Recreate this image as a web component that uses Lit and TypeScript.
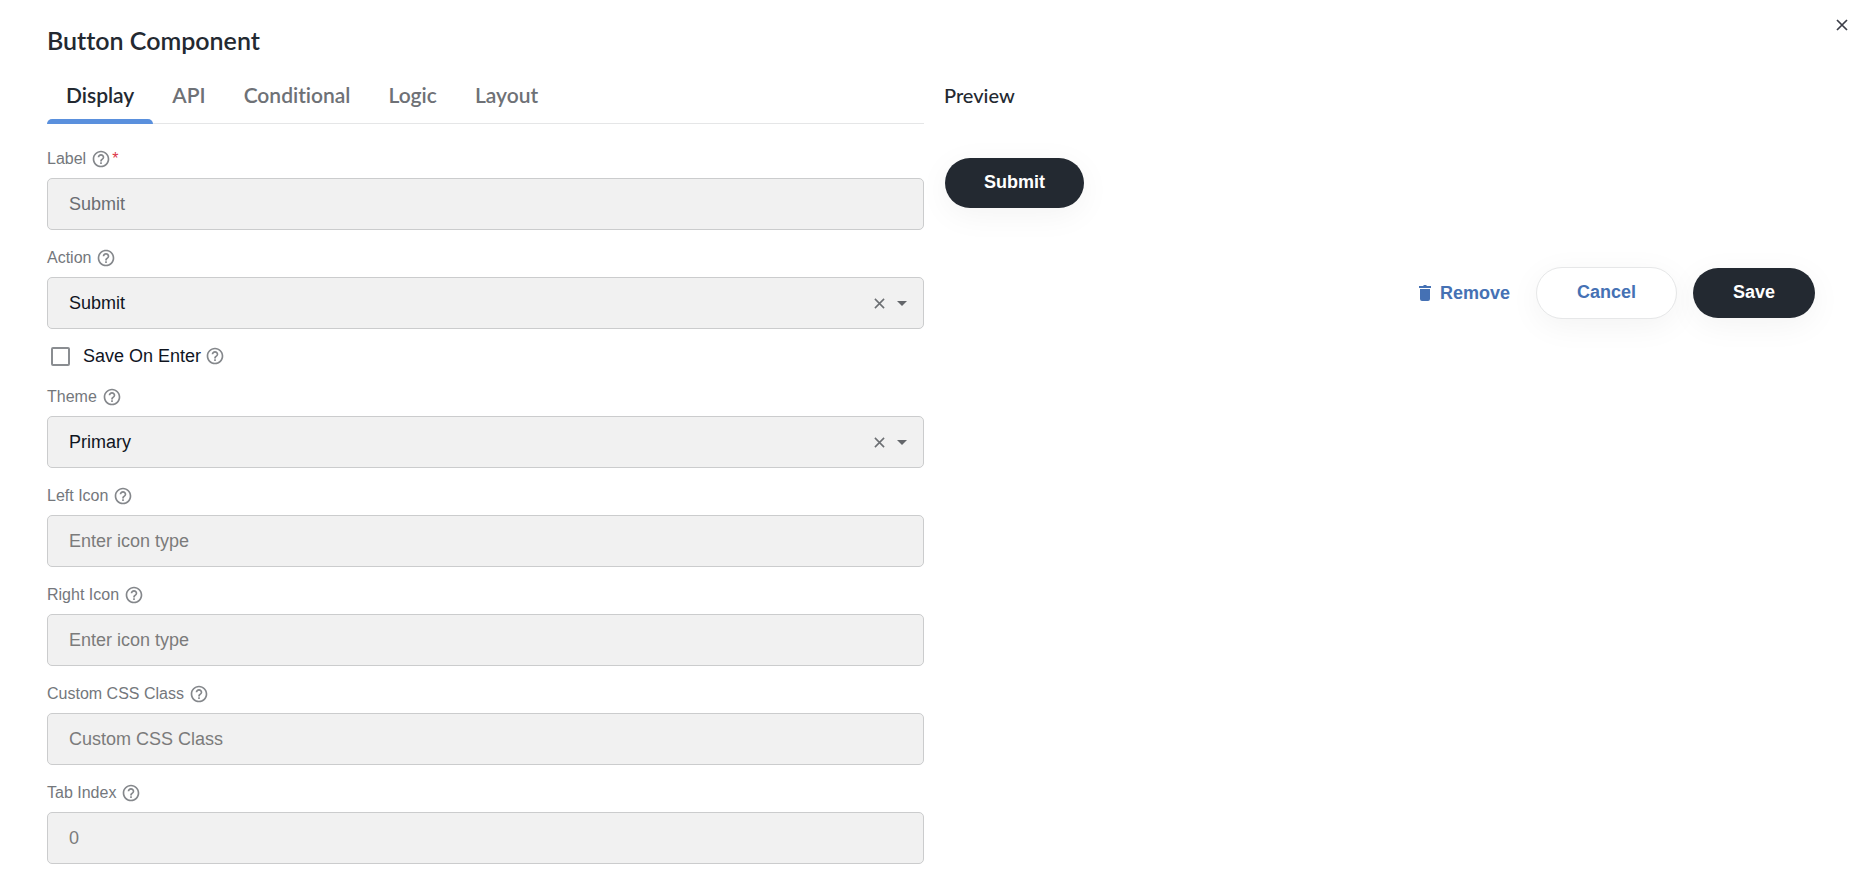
import { LitElement, html, css, svg, nothing } from "lit";
import { customElement, property, state } from "lit/decorators.js";
import { classMap } from "lit/directives/class-map.js";

const helpIcon = html`<svg class="help" viewBox="0 0 24 24" width="20" height="20" aria-hidden="true">
  ${svg`<path fill="currentColor" d="M11 18h2v-2h-2v2zm1-16C6.480 2 2 6.480 2 12s4.480 10 10 10 10-4.480 10-10S17.520 2 12 2zm0 18c-4.410 0-8-3.590-8-8s3.590-8 8-8 8 3.590 8 8-3.590 8-8 8zm0-14c-2.210 0-4 1.790-4 4h2c0-1.100.9-2 2-2s2 .9 2 2c0 2-3 1.750-3 5h2c0-2.250 3-2.500 3-5 0-2.210-1.790-4-4-4z"/>`}
</svg>`;

const crossIcon = (size: number) => html`<svg viewBox="0 0 12 12" width=${size} height=${size} aria-hidden="true">
  ${svg`<path d="M1 1l10 10M11 1L1 11" fill="none" stroke="currentColor" stroke-width="1.700"/>`}
</svg>`;

@customElement("form-field")
class FormField extends LitElement {
  @property() label = "";
  @property() placeholder = "";
  @property() value = "";
  @property({ type: Boolean }) required = false;
  @property({ type: Array }) options: string[] | null = null;

  static styles = css`
    :host { display: block; }
    .label {
      display: flex;
      align-items: center;
      height: 27px;
      padding: 14px 0 6px;
      font-size: 16px;
      color: #74777c;
    }
    .help { margin-left: 5px; color: #84878b; }
    .required { color: #dc3545; margin-left: 1px; }
    .control {
      display: flex;
      align-items: center;
      box-sizing: border-box;
      height: 52px;
      border: 1px solid #cbcccd;
      border-radius: 5px;
      background: #f1f1f1;
    }
    input, select {
      flex: 1;
      min-width: 0;
      height: 100%;
      box-sizing: border-box;
      padding: 0 21px;
      border: 0;
      outline: 0;
      background: none;
      appearance: none;
      font: inherit;
      color: #6a6d72;
    }
    select { color: #10151f; }
    input::placeholder { color: #7b7b7b; opacity: 1; }
    .clear {
      display: flex;
      padding: 0;
      border: 0;
      background: none;
      color: #6c6f73;
    }
    .arrow { margin: 0 16px 0 12px; color: #63666a; }
  `;

  private control() {
    if (!this.options) {
      return html`<input id="control" placeholder=${this.placeholder} .value=${this.value} ?required=${this.required} />`;
    }
    return html`
      <select id="control">
        ${this.options.map((o) => html`<option ?selected=${o === this.value}>${o}</option>`)}
      </select>
      <button class="clear" type="button" aria-label="Clear">${crossIcon(11)}</button>
      <svg class="arrow" viewBox="0 0 10 5" width="10" height="5" aria-hidden="true">
        ${svg`<path d="M0 0h10L5 5z" fill="currentColor"/>`}
      </svg>
    `;
  }

  render() {
    return html`
      <label class="label" for="control">
        ${this.label} ${helpIcon}
        ${this.required ? html`<span class="required">*</span>` : nothing}
      </label>
      <div class="control">${this.control()}</div>
    `;
  }
}

@customElement("app-root")
class AppRoot extends LitElement {
  @state() private active = "Display";

  static styles = css`
    :host {
      display: block;
      position: relative;
      padding: 22px 50px 6px 47px;
      background: #fff;
      color: #232931;
      font-family: "Liberation Sans", Arial, sans-serif;
      font-size: 18px;
    }
    h1, h2 {
      margin: 0;
      font-family: Lato, sans-serif;
      font-variant-ligatures: none;
    }
    h1 { font-size: 25px; line-height: 36px; font-weight: 600; }
    h2 { font-size: 20px; line-height: 30px; font-weight: 500; }
    .close {
      position: absolute;
      top: 15px;
      right: 19px;
      display: flex;
      padding: 4px;
      border: 0;
      background: none;
      color: #3c3e48;
    }
    .columns {
      display: grid;
      grid-template-columns: 1fr 1fr;
      gap: 20px;
      padding-top: 13px;
    }
    .tabs {
      display: flex;
      border-bottom: 1px solid #e5e6e7;
      margin-bottom: 7px;
    }
    .tab {
      display: flex;
      flex-direction: column;
      justify-content: space-between;
      height: 53px;
      margin-bottom: -1px;
      padding: 8px 0 0;
      border: 0;
      background: none;
      font: 600 21px/32px Lato, sans-serif;
      font-variant-ligatures: none;
      color: #6e7176;
    }
    .tab span { padding: 0 19px; }
    .tab.active { color: #232931; }
    .tab.active::after {
      content: "";
      width: 100%;
      height: 5px;
      border-radius: 5px 5px 0 0;
      background: #5a90dd;
    }
    .check {
      display: flex;
      align-items: center;
      height: 26px;
      padding: 14px 0 0 4px;
      color: #10151f;
    }
    .check input {
      appearance: none;
      box-sizing: border-box;
      width: 19px;
      height: 19px;
      margin: 0 13px 0 0;
      border: 2px solid #8a8d91;
      border-radius: 2px;
      background: #fff;
    }
    .help { margin-left: 4px; color: #84878b; }
    .side { padding-top: 9px; }
    .preview { padding: 48px 1px 59px; }
    .btn {
      height: 50px;
      padding: 0 39px 1px;
      border: 0;
      border-radius: 26px;
      background: #232931;
      color: #fff;
      font: bold 18px "Liberation Sans", Arial, sans-serif;
      box-shadow: 0 7px 32px rgba(0, 0, 0, 0.05);
    }
    .actions .btn { padding: 0 40px 1px; }
    .btn.outline {
      height: 52px;
      border: 1px solid #e6e7e8;
      background: #fff;
      color: #4571b4;
    }
    .actions {
      display: flex;
      align-items: center;
      justify-content: flex-end;
      gap: 16px;
      padding-right: 6px;
    }
    .remove {
      display: flex;
      align-items: center;
      gap: 9px;
      margin-right: 10px;
      padding: 0;
      border: 0;
      background: none;
      color: #4571b4;
      font: bold 18px "Liberation Sans", Arial, sans-serif;
    }
  `;

  render() {
    const tabs = ["Display", "API", "Conditional", "Logic", "Layout"];
    return html`
      <button class="close" type="button" aria-label="Close">${crossIcon(12)}</button>
      <h1>Button Component</h1>
      <div class="columns">
        <form>
          <div class="tabs" role="tablist">
            ${tabs.map((t) => html`<button
              type="button"
              role="tab"
              aria-selected=${t === this.active}
              class=${classMap({ tab: true, active: t === this.active })}
              @click=${() => (this.active = t)}
            ><span>${t}</span></button>`)}
          </div>
          <form-field label="Label" value="Submit" required></form-field>
          <form-field label="Action" value="Submit" .options=${["Submit", "Reset", "Event"]}></form-field>
          <label class="check"><input type="checkbox" />Save On Enter ${helpIcon}</label>
          <form-field label="Theme" value="Primary" .options=${["Primary", "Secondary"]}></form-field>
          <form-field label="Left Icon" placeholder="Enter icon type"></form-field>
          <form-field label="Right Icon" placeholder="Enter icon type"></form-field>
          <form-field label="Custom CSS Class" placeholder="Custom CSS Class"></form-field>
          <form-field label="Tab Index" placeholder="0"></form-field>
        </form>
        <section class="side">
          <h2>Preview</h2>
          <div class="preview"><button class="btn" type="button">Submit</button></div>
          <div class="actions">
            <button class="remove" type="button">
              <svg viewBox="0 0 12 16" width="12" height="16" aria-hidden="true">
                ${svg`<path fill="currentColor" d="M0 1h4l1-1h2l1 1h4v2H0zM1 4h10v10a2 2 0 0 1-2 2H3a2 2 0 0 1-2-2z"/>`}
              </svg>
              Remove
            </button>
            <button class="btn outline" type="button">Cancel</button>
            <button class="btn" type="button">Save</button>
          </div>
        </section>
      </div>
    `;
  }
}
